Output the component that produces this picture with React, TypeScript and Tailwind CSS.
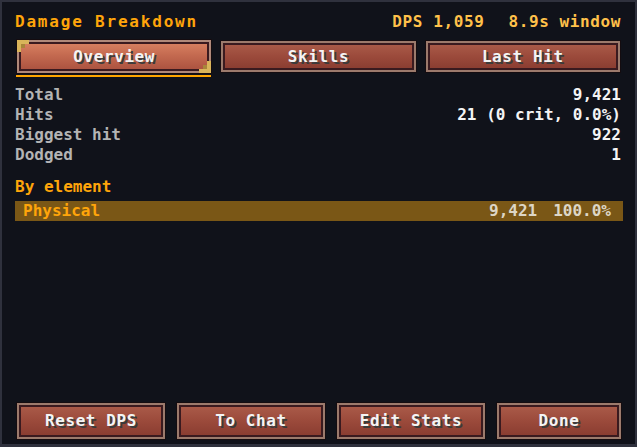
import type { ReactNode } from "react";

/* Damage Breakdown — pixel style stats window */

const stats = [
  { label: "Total", value: "9,421" },
  { label: "Hits", value: "21 (0 crit, 0.0%)" },
  { label: "Biggest hit", value: "922" },
  { label: "Dodged", value: "1" },
];

function PixelButton({ children, selected = false, className = "" }: { children: ReactNode; selected?: boolean; className?: string }) {
  return (
    <div className={`relative shadow-[0_0_0_1px_#140c10] ${className}`}>
      <div
        className={`h-full flex items-center justify-center border-2 shadow-[inset_0_0_0_2px_#3a1a1f] text-[#f4f4f4] tracking-[0.6px] [text-shadow:2px_2px_0_#3b3b3b] ${
          selected
            ? "border-[#b0897a] bg-[linear-gradient(180deg,#d98262_0%,#c46a50_45%,#a9503e_100%)]"
            : "border-[#9c7a6c] bg-[linear-gradient(180deg,#ab5c4a_0%,#9b4a3b_50%,#883b30_100%)]"
        }`}
      >
        {children}
      </div>
      {selected && (
        <>
          {/* gold corner trims */}
          <span className="absolute left-0 top-0 w-[12px] h-[4px] bg-[#d9b45a]" />
          <span className="absolute left-0 top-0 w-[4px] h-[12px] bg-[#d9b45a]" />
          <span className="absolute left-[4px] top-[4px] w-[4px] h-[4px] bg-[#a8853a]" />
          <span className="absolute right-0 bottom-0 w-[12px] h-[4px] bg-[#d9b45a]" />
          <span className="absolute right-0 bottom-0 w-[4px] h-[12px] bg-[#d9b45a]" />
          <span className="absolute right-[4px] bottom-[4px] w-[4px] h-[4px] bg-[#a8853a]" />
        </>
      )}
    </div>
  );
}

export default function App() {
  return (
    <div className="w-[637px] h-[447px] bg-[#10121a] border-2 border-b-[3px] border-[#2f313d] font-['DejaVu_Sans_Mono',monospace] font-bold text-[16px] leading-[20px] overflow-hidden">
      <div className="h-full flex flex-col pl-[13px] pr-[12px] pt-[10px] pb-[5px]">
        {/* Header */}
        <div className="flex items-center justify-between h-[20px]">
          <span className="text-[#ffa50a] tracking-[1.8px]">Damage Breakdown</span>
          <div className="flex gap-[24px] text-[#ffc14a] tracking-[0.6px] pr-[2px]">
            <span>DPS 1,059</span>
            <span>8.9s window</span>
          </div>
        </div>

        {/* Tabs */}
        <div className="mt-[8px] grid grid-cols-3 gap-[10px] pl-[2px] pr-[3px]">
          <div>
            <PixelButton selected className="h-[33px]">Overview</PixelButton>
            <div className="mt-[2px] -ml-[1px] h-[2px] bg-[#ffa500]" />
          </div>
          <PixelButton className="h-[31px] mt-[1px]">Skills</PixelButton>
          <PixelButton className="h-[31px] mt-[1px]">Last Hit</PixelButton>
        </div>

        {/* Stats */}
        <div className="mt-[8px] flex flex-col pr-[2px]">
          {stats.map(s => (
            <div key={s.label} className="flex justify-between h-[20px]">
              <span className="text-[#b4b4b4]">{s.label}</span>
              <span className="text-[#f4f4f4]">{s.value}</span>
            </div>
          ))}
        </div>

        <div className="mt-[12px] h-[20px] text-[#ffa50a]">By element</div>

        <div className="mt-[4px] h-[20px] flex items-center justify-between bg-[#7a5716] pl-[8px] pr-[12px]">
          <span className="text-[#ffa50a]">Physical</span>
          <div className="flex gap-[16px] text-[#ddd6c6]">
            <span>9,421</span>
            <span>100.0%</span>
          </div>
        </div>

        {/* Bottom actions */}
        <div className="mt-auto flex gap-[12px] pl-[2px]">
          <PixelButton className="w-[148px] h-[36px]">Reset DPS</PixelButton>
          <PixelButton className="w-[148px] h-[36px]">To Chat</PixelButton>
          <PixelButton className="w-[148px] h-[36px]">Edit Stats</PixelButton>
          <PixelButton className="w-[124px] h-[36px]">Done</PixelButton>
        </div>
      </div>
    </div>
  );
}
